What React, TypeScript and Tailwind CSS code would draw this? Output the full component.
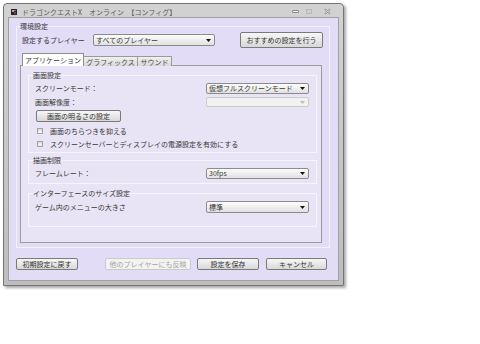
import { ReactNode } from "react";

const Arrow = ({ c = "#111" }: { c?: string }) => (
  <svg width="5" height="3" viewBox="0 0 5 3" className="shrink-0">
    <path d="M0 0H5L2.5 3Z" fill={c} />
  </svg>
);

function Select({ label, className = "", disabled }: { label?: string; className?: string; disabled?: boolean }) {
  return (
    <div
      className={`flex items-center justify-between rounded-[2px] border pl-[2px] pr-[3px] ${
        disabled ? "border-[#cbcbcb] bg-[#f1f1f1]" : "border-[#8b8b8b] bg-linear-to-b from-[#fcfcfc] to-[#e1e1e1]"
      } ${className}`}
    >
      <span>{label}</span>
      <Arrow c={disabled ? "#bdbdbd" : "#111"} />
    </div>
  );
}

function Btn({ children, className = "", disabled }: { children: ReactNode; className?: string; disabled?: boolean }) {
  return (
    <button
      className={`flex items-center justify-center rounded-[2px] border leading-[8px] ${
        disabled
          ? "border-[#cacaca] bg-[#f3f3f3] text-[#a3a3a3]"
          : "border-[#7a7a7a] bg-linear-to-b from-[#f7f7f7] to-[#d8d8d8] text-[#333]"
      } ${className}`}
    >
      {children}
    </button>
  );
}

function Check({ label }: { label: string }) {
  return (
    <div className="flex h-[12px] items-center pl-[2px]">
      <div className="h-[6px] w-[6px] border border-[#a2a2a2] bg-linear-to-b from-[#dcdcdc] to-[#f6f6f6]" />
      <span className="ml-[7px]">{label}</span>
    </div>
  );
}

export default function App() {
  return (
    <div className="h-[344px] w-[480px] bg-white pl-[3px] pt-[3px] font-['Noto_Sans_CJK_JP',sans-serif] text-[7px] leading-[8px] text-[#383838]">
      <div className="flex h-[283px] w-[341px] flex-col rounded-t-[4px] border border-[#747474] bg-linear-to-b from-[#d2d2d2] to-[#bdbdbd] px-[4px] shadow-[2px_2px_3px_rgba(0,0,0,0.35)]">
        {/* title bar */}
        <div className="flex h-[13px] items-center pl-[3px] pt-[2px]">
          <svg width="6" height="6" viewBox="0 0 6 6" className="shrink-0">
            <rect width="6" height="6" fill="#1c2340" />
            <rect x="1" y="1" width="2" height="2" fill="#d8b040" />
            <rect x="3" y="3" width="2" height="2" fill="#b03030" />
            <rect x="3" y="1" width="2" height="1" fill="#6080c0" />
          </svg>
          <span className="ml-[5px] whitespace-pre text-[#5a5a5a]">ドラゴンクエストX　オンライン　【コンフィグ】</span>
          <div className="ml-auto flex items-center pr-[8px]">
            <div className="h-[3px] w-[7px] rounded-[1px] border border-[#8a8a8a] bg-[#f4f4f4]" />
            <div className="ml-[7px] h-[5px] w-[6px] border border-[#b8b8b8] bg-[#cdcdcd]" />
            <svg width="7" height="7" viewBox="0 0 7 7" className="ml-[12px]">
              <path d="M1 1L6 6M6 1L1 6" stroke="#8a8a8a" strokeWidth="1.6" />
              <path d="M1.5 1.5L5.5 5.5M5.5 1.5L1.5 5.5" stroke="#f2f2f2" strokeWidth="0.6" />
            </svg>
          </div>
        </div>

        {/* client */}
        <div className="flex h-[264px] flex-col border border-[#9f9f9f] bg-[#e3dcf7] pl-[7px] pt-[4px]">
          <fieldset className="w-[314px] border border-[#f3f1fb] pb-[4px]">
            <legend className="ml-[3px] leading-[8px]">環境設定</legend>
            <div className="mt-[2px] flex h-[16px] items-center pl-[5px]">
              <span className="w-[71px]">設定するプレイヤー</span>
              <Select label="すべてのプレイヤー" className="h-[12px] w-[122px]" />
              <Btn className="ml-[25px] h-[16px] w-[83px]">おすすめの設定を行う</Btn>
            </div>

            {/* tabs */}
            <div className="ml-[3px] mt-[5px] flex h-[13px] items-end pl-[2px]">
              <div className="relative z-10 flex h-[13px] w-[62px] items-center justify-center border border-b-0 border-[#8f8f8f] bg-white">
                アプリケーション
              </div>
              <div className="flex h-[10px] w-[54px] items-center justify-center border border-b-0 border-l-0 border-[#9a9a9a] bg-linear-to-b from-[#f0f0f0] to-[#d9d9d9] text-[#4a4a4a]">
                グラフィックス
              </div>
              <div className="flex h-[10px] w-[34px] items-center justify-center border border-b-0 border-l-0 border-[#9a9a9a] bg-linear-to-b from-[#f0f0f0] to-[#d9d9d9] text-[#4a4a4a]">
                サウンド
              </div>
            </div>
            <div className="-mt-[1px] ml-[3px] flex h-[178px] w-[302px] flex-col border border-[#9c9c9c] bg-[#e8e4f5] pl-[7px] pt-[5px]">
              <fieldset className="w-[289px] border border-[#f6f4fc] pb-[2px]">
                <legend className="ml-[4px] leading-[8px]">画面設定</legend>
                <div className="pl-[6px] pr-[7px]">
                  <div className="mt-[3px] flex h-[12px] items-center justify-between">
                    <span>スクリーンモード：</span>
                    <Select label="仮想フルスクリーンモード" className="h-[11px] w-[103px]" />
                  </div>
                  <div className="mt-[2px] flex h-[12px] items-center justify-between">
                    <span>画面解像度：</span>
                    <Select disabled className="h-[10px] w-[103px]" />
                  </div>
                  <Btn className="ml-[1px] mt-[2px] h-[12px] w-[85px]">画面の明るさの設定</Btn>
                  <div className="mt-[3px]">
                    <Check label="画面のちらつきを抑える" />
                  </div>
                  <div className="mt-[1px]">
                    <Check label="スクリーンセーバーとディスプレイの電源設定を有効にする" />
                  </div>
                </div>
              </fieldset>

              <fieldset className="mt-[3px] w-[289px] border border-[#f6f4fc] pb-[4px]">
                <legend className="ml-[4px] leading-[8px]">描画制限</legend>
                <div className="mt-[3px] flex h-[12px] items-center justify-between pl-[6px] pr-[7px]">
                  <span>フレームレート：</span>
                  <Select label="30fps" className="h-[11px] w-[103px]" />
                </div>
              </fieldset>

              <fieldset className="mt-[5px] w-[289px] border border-[#f6f4fc] pb-[13px]">
                <legend className="ml-[4px] leading-[8px]">インターフェースのサイズ設定</legend>
                <div className="mt-[4px] flex h-[12px] items-center justify-between pl-[6px] pr-[7px]">
                  <span>ゲーム内のメニューの大きさ</span>
                  <Select label="標準" className="h-[12px] w-[103px]" />
                </div>
              </fieldset>
            </div>
          </fieldset>

          <div className="mt-[10px] flex h-[12px] items-center">
            <Btn className="h-[12px] w-[62px]">初期設定に戻す</Btn>
            <Btn disabled className="ml-[27px] h-[12px] w-[86px]">
              他のプレイヤーにも反映
            </Btn>
            <Btn className="ml-[6px] h-[12px] w-[62px]">設定を保存</Btn>
            <Btn className="ml-[7px] h-[12px] w-[61px]">キャンセル</Btn>
          </div>
        </div>
      </div>
    </div>
  );
}
